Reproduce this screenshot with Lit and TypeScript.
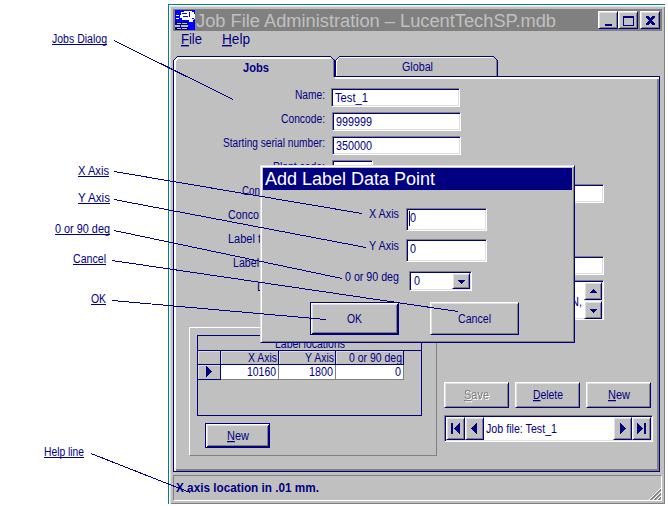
import { LitElement, html, svg, css, nothing, TemplateResult } from "lit";
import { customElement } from "lit/decorators.js";

interface TextOptions {
  size?: number;
  accel?: boolean;
  cls?: string;
}

/** One line of text, fitted to a given width; the baseline sits 12px below the top. */
function line(text: string, width: number, o: TextOptions = {}) {
  const { size = 12.5, accel = false, cls = "" } = o;
  return html`<svg class="line ${cls}" width=${width} height="16">
    <text x="0" y="12" font-size=${size} textLength=${width} lengthAdjust="spacingAndGlyphs">${
      accel ? svg`<tspan text-decoration="underline">${text[0]}</tspan>${text.slice(1)}` : text
    }</text>
  </svg>`;
}

type Glyph = "up" | "down" | "left" | "right" | "first" | "last" | "min" | "max" | "close";

const GLYPHS: Record<Glyph, TemplateResult> = {
  up: svg`<path d="M6 4h1v1h1v1h1v1h1v1H3V7h1V6h1V5h1z"/>`,
  down: svg`<path d="M3 5h7v1H9v1H8v1H7v1H6V8H5V7H4V6H3z"/>`,
  left: svg`<path d="M9 1v11L3 6.500z"/>`,
  right: svg`<path d="M4 1v11l6-5.500z"/>`,
  first: svg`<path d="M2 1h2v11H2zM11 1v11L5 6.500z"/>`,
  last: svg`<path d="M9 1h2v11H9zM2 1v11l6-5.500z"/>`,
  min: svg`<path d="M3 10h7v2H3z"/>`,
  max: svg`<path fill-rule="evenodd" d="M1 2h11v10H1zM2 4v7h9V4z"/>`,
  close: svg`<path d="M2 2h3l1.500 2L8 2h3v1L8 6.500 11 10v1H8L6.500 9 5 11H2v-1l3-3.500L2 3z"/>`,
};

const glyph = (g: Glyph) => html`<svg class="glyph" width="13" height="13">${GLYPHS[g]}</svg>`;

const callouts = [
  { text: "Jobs Dialog", x: 52, y: 43, w: 55, to: [114, 40, 233, 99] },
  { text: "X Axis", x: 78, y: 175, w: 31, to: [114, 171, 362, 213] },
  { text: "Y Axis", x: 78, y: 202, w: 32, to: [114, 199, 366, 247] },
  { text: "0 or 90 deg", x: 55, y: 233, w: 55, to: [114, 230, 342, 278] },
  { text: "Cancel", x: 73, y: 263, w: 33, to: [112, 260, 458, 311] },
  { text: "OK", x: 91, y: 303, w: 15, to: [112, 300, 326, 319] },
  { text: "Help line", x: 44, y: 456, w: 40, to: [91, 453, 190, 492] },
];

@customElement("app-root")
export class AppRoot extends LitElement {
  static styles = css`
    :host {
      display: block;
      position: relative;
      width: 668px;
      height: 506px;
      overflow: hidden;
      background: #fff;
      color: #000080;
      font-family: "Liberation Sans", Arial, sans-serif;
    }
    * { box-sizing: border-box; }
    svg { display: block; flex: none; }
    .line { overflow: visible; fill: currentColor; }
    .glyph { fill: #000080; shape-rendering: crispEdges; }
    .bold { font-weight: bold; }
    .window {
      position: relative;
      margin: 4px 0 0 168px;
      width: 497px;
      height: 500px;
      background: #c0c0c0;
      border: solid #008080;
      border-width: 1px 0 0 1px;
      padding: 4px 3px 0 4px;
      box-shadow: inset 1px 1px #fff, inset 2px 2px #dfdfdf, inset -1px -1px #808080;
      display: flex;
      flex-direction: column;
    }
    .titlebar {
      height: 22px;
      background: #808080;
      color: #c0c0c0;
      display: flex;
      padding: 1px 2px;
    }
    .titlebar .line { margin: 5px 0 0 1px; }
    .controls { display: flex; margin: 1px 0 0 auto; }
    .raised {
      background: #c0c0c0;
      border: 1px solid;
      border-color: #fff #000080 #000080 #fff;
      box-shadow: inset 1px 1px #dfdfdf, inset -1px -1px #808080;
      display: flex;
      align-items: center;
      justify-content: center;
      flex: none;
    }
    .control { width: 20px; height: 18px; }
    .control:last-child { margin-left: 2px; }
    .sunken {
      background: #fff;
      border: 1px solid;
      border-color: #808080 #fff #fff #808080;
      box-shadow: inset 1px 1px #000080, inset -1px -1px #dfdfdf;
      display: flex;
      flex: none;
    }
    .menu { height: 25px; display: flex; gap: 20px; padding: 1px 0 0 8px; }
    .tabs {
      height: 20px;
      position: relative;
      z-index: 1;
      display: flex;
    }
    .tabs svg { overflow: visible; }
    .panel {
      width: 487px;
      height: 396px;
      border: 1px solid #000080;
      box-shadow: inset 2px 2px #fff, inset -2px -2px #808080;
      padding-top: 11px;
    }
    .row { display: flex; height: 24px; }
    .label { width: 151px; display: flex; justify-content: flex-end; margin-top: -1px; height: 16px; }
    .label.partial { justify-content: flex-start; }
    .field { height: 19px; width: 129px; margin-left: 7px; padding: 1px 3px; }
    .field.first { margin-left: 6px; }
    .field.short { width: 41px; }
    .field.wide { width: 272px; }
    .memo { height: 40px; }
    .memo .field { height: 40px; padding: 1px; justify-content: flex-end; }
    .memo-text { margin-right: 2px; padding-top: 12px; }
    .scroll {
      width: 18px;
      display: flex;
      flex-direction: column;
      gap: 1px;
      background: #dfdfdf;
    }
    .scroll .raised { width: 18px; height: 18px; }
    .lower { display: flex; }
    .group {
      width: 248px;
      height: 129px;
      margin: 7px 0 0 15px;
      border: 1px solid;
      border-color: #fff #808080 #808080 #fff;
      padding: 7px;
    }
    .table { width: 225px; height: 81px; border: 1px solid #000080; }
    .caption { height: 15px; border-bottom: 1px solid #000080; padding: 0 0 0 77px; }
    .cells { display: grid; grid-template-columns: 23px 58px 57px 68px; width: 206px; }
    .cell {
      height: 14px;
      display: flex;
      justify-content: flex-end;
      border: solid #000080;
      border-width: 0 1px 1px 0;
      box-shadow: inset 1px 1px #dfdfdf;
      padding-right: 1px;
    }
    .cell .line { margin-top: -1px; }
    .cell.value {
      height: 15px;
      background: #fff;
      border-color: #808080;
      box-shadow: none;
      padding-right: 2px;
    }
    .cell.marker { height: 15px; justify-content: center; }
    .new { width: 65px; height: 25px; margin: 7px 0 0 8px; }
    .default {
      border: 1px solid #000080;
      box-shadow: inset 1px 1px #fff, inset -1px -1px #000080, inset 2px 2px #dfdfdf, inset -2px -2px #808080;
    }
    .actions { margin: 62px 0 0 7px; }
    .buttons { display: flex; gap: 6px; }
    .button { width: 65px; height: 26px; }
    .disabled { color: #808080; filter: drop-shadow(1px 1px 0 #fff); }
    .nav { width: 209px; height: 27px; margin-top: 7px; padding: 1px; }
    .nav .raised { width: 19px; height: 23px; }
    .nav-text { flex: 1; padding: 4px 0 0 2px; }
    .status {
      margin-top: 3px;
      height: 26px;
      border: 1px solid;
      border-color: #808080 #fff #fff #808080;
      padding: 4px 0 0 2px;
      display: flex;
    }
    .grip { margin: -4px 0 0 auto; align-self: flex-end; }
    .dialog {
      position: absolute;
      z-index: 2;
      left: 260px;
      top: 165px;
      width: 315px;
      height: 178px;
      background: #c0c0c0;
      border: 1px solid;
      border-color: #dfdfdf #000080 #000080 #dfdfdf;
      box-shadow: inset 1px 1px #fff, inset -1px -1px #808080;
      padding: 2px;
    }
    .dialog-title { height: 22px; background: #000080; color: #fff; padding: 5px 0 0 2px; }
    .entry { display: flex; height: 31px; }
    .entries { padding-top: 18px; }
    .entry-label { width: 136px; display: flex; justify-content: flex-end; }
    .entry .line { margin-top: -2px; }
    .entry .sunken { width: 81px; height: 23px; margin-left: 7px; padding: 1px 2px; }
    .entry .sunken .line { margin-top: 0; }
    .entry .caret { width: 1px; height: 15px; margin-top: 1px; background: #000080; }
    .entry .gap { width: 1px; }
    .entry .combo { width: 63px; height: 20px; margin: 1px 0 0 10px; padding: 1px; justify-content: space-between; }
    .entry .combo .line { margin: 0 0 0 3px; }
    .combo .raised { width: 18px; height: 16px; }
    .entry.second .entry-label, .entry.last .entry-label { padding-top: 1px; }
    .dialog-buttons { display: flex; gap: 31px; padding: 1px 0 0 47px; }
    .dialog-buttons .raised { width: 89px; height: 33px; }
    .callouts { position: absolute; inset: 0; z-index: 3; fill: #000080; pointer-events: none; }
    .pointer { stroke: #000080; stroke-width: 1; shape-rendering: crispEdges; }
  `;

  private formRow(label: string, width: number, field: string, value = "", valueWidth = 0, indent = 0) {
    return html`<div class="row">
      <div class="label ${indent ? "partial" : ""}">
        <svg width=${indent} height="16"></svg>${line(label, width)}
      </div>
      ${field
        ? html`<div class="sunken field ${field}">${value ? line(value, valueWidth) : nothing}</div>`
        : nothing}
    </div>`;
  }

  private tabs() {
    return html`<div class="tabs">
      <svg width="326" height="23">
        <path fill="#c0c0c0" d="M1 23V5l4-4h153l4 4v18z" />
        <g fill="none" shape-rendering="crispEdges">
          <path stroke="#fff" stroke-width="2" d="M2 23V5l3-3h153" />
          <path stroke="#808080" stroke-width="2" d="M161 3v18" />
          <path stroke="#000080" d="M.5 23V4.500l4-4h153l4 4v16M162.500 20V4.500l4-4h154l4 4v16" />
          <path stroke="#fff" d="M163.500 20V5l3-3.500h153" />
          <path stroke="#808080" d="M323.500 4v16" />
        </g>
        <g fill="#000080" font-size="12.500">
          <text class="bold" x="70" y="16" textLength="26" lengthAdjust="spacingAndGlyphs">Jobs</text>
          <text x="229" y="15" textLength="31" lengthAdjust="spacingAndGlyphs">Global</text>
        </g>
      </svg>
    </div>`;
  }

  private table() {
    return html`<div class="table">
      <div class="caption">${line("Label locations", 70)}</div>
      <div class="cells">
        <div class="cell"></div>
        <div class="cell">${line("X Axis", 29)}</div>
        <div class="cell">${line("Y Axis", 29)}</div>
        <div class="cell">${line("0 or 90 deg", 53)}</div>
        <div class="cell marker">${glyph("right")}</div>
        <div class="cell value">${line("10160", 29)}</div>
        <div class="cell value">${line("1800", 24)}</div>
        <div class="cell value">${line("0", 6)}</div>
      </div>
    </div>`;
  }

  private dialog() {
    return html`<div class="dialog">
      <div class="dialog-title">${line("Add Label Data Point", 170, { size: 18 })}</div>
      <div class="entries">
        <div class="entry">
          <div class="entry-label">${line("X Axis", 30)}</div>
          <div class="sunken"><div class="caret"></div>${line("0", 6)}</div>
        </div>
        <div class="entry second">
          <div class="entry-label">${line("Y Axis", 30)}</div>
          <div class="sunken"><div class="gap"></div>${line("0", 6)}</div>
        </div>
        <div class="entry last">
          <div class="entry-label">${line("0 or 90 deg", 54)}</div>
          <div class="sunken combo">${line("0", 6)}<div class="raised">${glyph("down")}</div></div>
        </div>
      </div>
      <div class="dialog-buttons">
        <div class="raised default">${line("OK", 15)}</div>
        <div class="raised">${line("Cancel", 33)}</div>
      </div>
    </div>`;
  }

  render() {
    return html`
      <div class="window">
        <div class="titlebar">
          <svg width="20" height="20" shape-rendering="crispEdges">
            <path fill="#0000ff" d="M0 0h20v20H0z" />
            <path fill="#fff" d="M6 2h3V1h8v1h2v2h1v5h-1v1h-1v2h-4v-2H7V8H5V5h1z" />
            <path fill="#0000ff" d="M7 3h5v1H7zM8 6h5v1H8zM14 2h1v5h-1zM17 8h2v1h-2z" />
            <path fill="#fff" d="M1 5h3v1H1zM1 8h3v1H1z" />
            <path fill="#000080" d="M0 12h13v8H0z" />
            <path fill="#c0c0c0" d="M2 13h4v1H2zM7 13h5v1H7zM0 15h5v2H0zM6 15h7v2H6zM2 18h4v1H2zM7 18h5v1H7z" />
          </svg>
          ${line("Job File Administration – LucentTechSP.mdb", 360, { size: 18 })}
          <div class="controls">
            <div class="raised control">${glyph("min")}</div>
            <div class="raised control">${glyph("max")}</div>
            <div class="raised control">${glyph("close")}</div>
          </div>
        </div>
        <div class="menu">
          ${line("File", 21, { size: 14, accel: true })} ${line("Help", 28, { size: 14, accel: true })}
        </div>
        ${this.tabs()}
        <div class="panel">
          ${this.formRow("Name:", 30, "first", "Test_1", 33)}
          ${this.formRow("Concode:", 44, "text", "999999", 36)}
          ${this.formRow("Starting serial number:", 102, "text", "350000", 36)}
          ${this.formRow("Plant code:", 52, "short")}
          ${this.formRow("Con", 18, "wide", "", 0, 68)}
          ${this.formRow("Conco", 31, "", "", 0, 54)}
          ${this.formRow("Label t", 33, "", "", 0, 54)}
          ${this.formRow("Label", 26, "wide", "", 0, 59)}
          <div class="row memo">
            <div class="label partial"><svg width="83" height="16"></svg>${line("D", 8)}</div>
            <div class="sunken field wide">
              <div class="memo-text">${line("N,", 11)}</div>
              <div class="scroll">
                <div class="raised">${glyph("up")}</div>
                <div class="raised">${glyph("down")}</div>
              </div>
            </div>
          </div>
          <div class="lower">
            <div class="group">
              ${this.table()}
              <div class="raised default new">${line("New", 22, { accel: true })}</div>
            </div>
            <div class="actions">
              <div class="buttons">
                <div class="raised button">${line("Save", 25, { accel: true, cls: "disabled" })}</div>
                <div class="raised button">${line("Delete", 30, { accel: true })}</div>
                <div class="raised button">${line("New", 22, { accel: true })}</div>
              </div>
              <div class="sunken nav">
                <div class="raised">${glyph("first")}</div>
                <div class="raised">${glyph("left")}</div>
                <div class="nav-text">${line("Job file: Test_1", 71)}</div>
                <div class="raised">${glyph("right")}</div>
                <div class="raised">${glyph("last")}</div>
              </div>
            </div>
          </div>
        </div>
        <div class="status">
          ${line("X axis location in .01 mm.", 143, { cls: "bold" })}
          <svg class="grip" width="12" height="12" shape-rendering="crispEdges">
            <path stroke="#808080" stroke-width="1.500" d="M1 12 12 1M5 12l7-7M9 12l3-3" />
            <path stroke="#fff" d="M0 12 12 0M4 12l8-8M8 12l4-4" />
          </svg>
        </div>
      </div>
      ${this.dialog()}
      <svg class="callouts" width="668" height="506" font-size="12">
        ${callouts.map(
          (c) => svg`
            <text x=${c.x} y=${c.y} textLength=${c.w} lengthAdjust="spacingAndGlyphs">${c.text}</text>
            <path class="pointer" d="M${c.x} ${c.y + 1.5}h${c.w}" />
            <path class="pointer" d="M${c.to[0]} ${c.to[1] + 0.5}L${c.to[2]} ${c.to[3] + 0.5}" />`
        )}
      </svg>
    `;
  }
}
